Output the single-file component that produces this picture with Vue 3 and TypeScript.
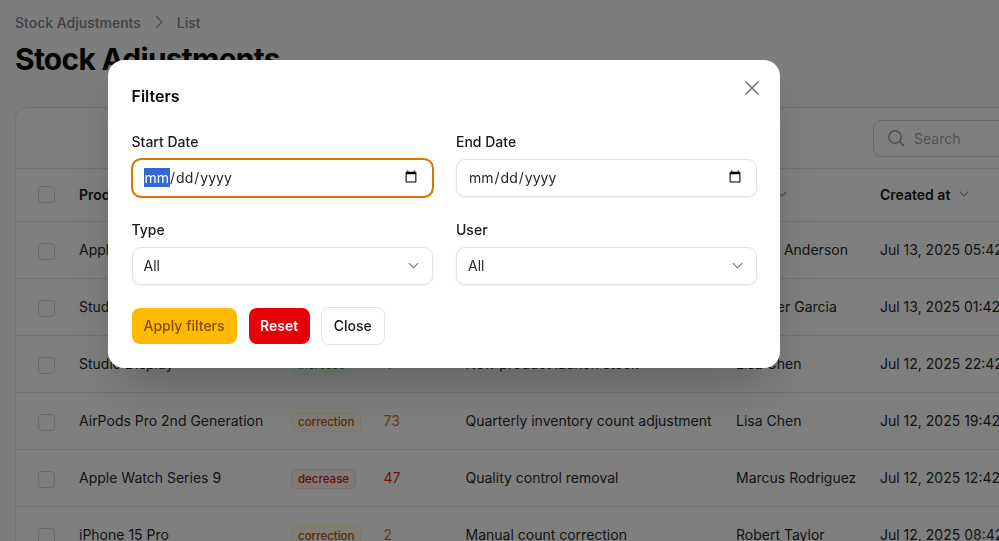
<script setup lang="ts">
import { onMounted, ref } from 'vue'

interface Row {
  product: string
  type: 'increase' | 'decrease' | 'correction'
  qty: number
  reason: string
  user: string
  created: string
}

const rows: Row[] = [
  { product: 'Apple Watch Ultra 2', type: 'increase', qty: 24, reason: 'Supplier restock delivery', user: 'Robert Anderson', created: 'Jul 13, 2025 05:42' },
  { product: 'Studio Display', type: 'decrease', qty: 12, reason: 'Damaged goods write-off', user: 'Jennifer Garcia', created: 'Jul 13, 2025 01:42' },
  { product: 'Studio Display', type: 'increase', qty: 4, reason: 'New product launch stock', user: 'Lisa Chen', created: 'Jul 12, 2025 22:42' },
  { product: 'AirPods Pro 2nd Generation', type: 'correction', qty: 73, reason: 'Quarterly inventory count adjustment', user: 'Lisa Chen', created: 'Jul 12, 2025 19:42' },
  { product: 'Apple Watch Series 9', type: 'decrease', qty: 47, reason: 'Quality control removal', user: 'Marcus Rodriguez', created: 'Jul 12, 2025 12:42' },
  { product: 'iPhone 15 Pro', type: 'correction', qty: 2, reason: 'Manual count correction', user: 'Robert Taylor', created: 'Jul 12, 2025 08:42' },
]

const columns = ['Product', 'Type', 'Quantity', 'Reason', 'User']
const startDate = ref<HTMLInputElement | null>(null)

onMounted(() => {
  startDate.value?.focus()
})
</script>

<template>
  <div class="page">
    <nav class="crumbs">
      <span>Stock Adjustments</span>
      <svg class="crumb-sep" viewBox="0 0 20 20" fill="none" stroke="currentColor" stroke-width="1.5">
        <path d="M7.5 4.5 13 10l-5.5 5.5" stroke-linecap="round" stroke-linejoin="round" />
      </svg>
      <span>List</span>
    </nav>
    <h1 class="title">Stock Adjustments</h1>

    <section class="card">
      <div class="toolbar">
        <div class="search">
          <svg class="search-icon" viewBox="0 0 20 20" fill="none" stroke="currentColor" stroke-width="1.5">
            <circle cx="9" cy="9" r="6.2" />
            <path d="m13.6 13.6 4 4" stroke-linecap="round" />
          </svg>
          <span>Search</span>
        </div>
      </div>
      <table class="table">
        <colgroup>
          <col class="c-check" />
          <col class="c-product" />
          <col class="c-type" />
          <col class="c-qty" />
          <col class="c-reason" />
          <col class="c-user" />
          <col class="c-created" />
        </colgroup>
        <thead>
          <tr>
            <th><span class="check"></span></th>
            <th v-for="c in columns" :key="c">
              <span class="th-inner">{{ c }}
                <svg class="sort" viewBox="0 0 20 20" fill="none" stroke="currentColor" stroke-width="1.5">
                  <path d="m5 7.5 5 5 5-5" stroke-linecap="round" stroke-linejoin="round" />
                </svg>
              </span>
            </th>
            <th>
              <span class="th-inner">Created at
                <svg class="sort" viewBox="0 0 20 20" fill="none" stroke="currentColor" stroke-width="1.5">
                  <path d="m5 7.5 5 5 5-5" stroke-linecap="round" stroke-linejoin="round" />
                </svg>
              </span>
            </th>
          </tr>
        </thead>
        <tbody>
          <tr v-for="(r, i) in rows" :key="i">
            <td><span class="check"></span></td>
            <td>{{ r.product }}</td>
            <td><span class="badge" :class="r.type">{{ r.type }}</span></td>
            <td :class="'qty-' + r.type">{{ r.qty }}</td>
            <td>{{ r.reason }}</td>
            <td>{{ r.user }}</td>
            <td>{{ r.created }}</td>
          </tr>
        </tbody>
      </table>
    </section>

    <div class="overlay">
      <div class="modal">
        <header class="modal-head">
          <h2>Filters</h2>
          <svg class="close-x" viewBox="0 0 24 24" fill="none" stroke="currentColor" stroke-width="1.5">
            <path d="M6 6l12 12M18 6 6 18" stroke-linecap="round" />
          </svg>
        </header>
        <div class="fields">
          <label class="field">
            <span>Start Date</span>
            <input ref="startDate" class="control" type="date" />
          </label>
          <label class="field">
            <span>End Date</span>
            <input class="control" type="date" />
          </label>
          <label class="field">
            <span>Type</span>
            <select class="control select">
              <option>All</option>
            </select>
          </label>
          <label class="field">
            <span>User</span>
            <select class="control select">
              <option>All</option>
            </select>
          </label>
        </div>
        <div class="actions">
          <button class="btn apply" type="button">Apply filters</button>
          <button class="btn reset" type="button">Reset</button>
          <button class="btn close" type="button">Close</button>
        </div>
      </div>
    </div>
  </div>
</template>

<style>
html, body {
  overflow: hidden;
  background: #fafafa;
}
</style>

<style scoped>
.page {
  width: 1300px;
  height: 541px;
  box-sizing: border-box;
  padding: 12px 0 0 15px;
  font-family: Inter, "Liberation Sans", sans-serif;
  font-size: 14px;
  color: #18181b;
  overflow: hidden;
}
.crumbs {
  display: flex;
  align-items: center;
  height: 20px;
  font-weight: 500;
  color: #80808a;
}
.crumb-sep {
  width: 20px;
  height: 20px;
  margin: 0 8px;
  color: #a1a1aa;
}
.title {
  margin: 9px 0 0;
  font-size: 30px;
  line-height: 36px;
  font-weight: 700;
  letter-spacing: -0.75px;
  color: #09090b;
}
.card {
  margin-top: 30px;
  width: 1240px;
  background: #fff;
  border: 1px solid #e4e4e7;
  border-radius: 12px;
  box-sizing: border-box;
}
.toolbar {
  height: 61px;
  box-sizing: border-box;
  padding: 12px 0 0 857px;
  border-bottom: 1px solid #e4e4e7;
}
.search {
  display: flex;
  align-items: center;
  width: 300px;
  height: 37px;
  box-sizing: border-box;
  padding: 0 0 1px 12px;
  gap: 8px;
  border: 1px solid #d4d4d8;
  border-radius: 8px;
  color: #a1a1aa;
}
.search-icon {
  width: 20px;
  height: 20px;
}
.table {
  border-collapse: collapse;
  table-layout: fixed;
  width: 1238px;
}
.c-check { width: 63px; }
.c-product { width: 212px; }
.c-type { width: 92.5px; }
.c-qty { width: 82px; }
.c-reason { width: 270.5px; }
.c-user { width: 144px; }
.table th {
  height: 50px;
  padding: 0 0 2px;
  text-align: left;
  font-weight: 600;
  border-bottom: 1px solid #e4e4e7;
}
.table td {
  height: 54px;
  padding: 0 0 2px;
  border-bottom: 1px solid #e4e4e7;
  color: #27272a;
}
.th-inner {
  display: inline-flex;
  align-items: center;
  gap: 6px;
}
.sort {
  width: 16px;
  height: 16px;
  color: #a1a1aa;
}
.check {
  display: block;
  width: 15px;
  height: 15px;
  margin: 4px 0 0 22px;
  border: 1px solid #d4d4d8;
  border-radius: 4px;
  background: #fff;
}
.table th .check {
  margin-top: 1px;
}
.badge {
  display: inline-block;
  margin-top: 3px;
  padding: 1px 6px;
  border-radius: 5px;
  font-size: 11.5px;
  line-height: 16px;
  font-weight: 500;
  border: 1px solid;
}
.increase {
  background: #f0fdf4;
  color: #15803d;
  border-color: #dcfce7;
}
.decrease {
  background: #fef2f2;
  color: #b91c1c;
  border-color: #fdd8d8;
}
.correction {
  background: #fffbeb;
  color: #b45309;
  border-color: #fef3c7;
}
.qty-increase { color: #16a34a !important; }
.qty-decrease { color: #dc2626 !important; }
.qty-correction { color: #d97706 !important; }

.overlay {
  position: fixed;
  inset: 0;
  background: rgba(0, 0, 0, 0.5);
}
.modal {
  position: absolute;
  left: 108px;
  top: 60px;
  width: 672px;
  height: 308px;
  box-sizing: border-box;
  padding: 24px 23px 24px 23.5px;
  background: #fff;
  border-radius: 16px;
  box-shadow: 0 25px 50px -12px rgba(0, 0, 0, 0.25);
}
.modal-head {
  position: relative;
  height: 24px;
}
.modal-head h2 {
  margin: 0;
  font-size: 16px;
  line-height: 24px;
  font-weight: 600;
  color: #09090b;
}
.close-x {
  position: absolute;
  right: -6.5px;
  top: -8px;
  width: 24px;
  height: 24px;
  color: #71717a;
}
.fields {
  display: grid;
  grid-template-columns: 301px 301px;
  column-gap: 23.5px;
  row-gap: 23px;
  margin-top: 24px;
}
.field {
  display: flex;
  flex-direction: column;
  gap: 7px;
}
.field > span {
  font-size: 14px;
  line-height: 20px;
  font-weight: 500;
  color: #18181b;
}
.field .control {
  height: 38px;
  width: 100%;
  box-sizing: border-box;
  padding: 0 12px 2px 11px;
  border: 1px solid #e4e4e7;
  border-radius: 9px;
  background: #fff;
  font-family: inherit;
  font-size: 14px;
  color: #27272a;
  box-shadow: 0 1px 2px rgba(0, 0, 0, 0.08);
}
.field .control:focus {
  outline: 2px solid #d97706;
  outline-offset: -1px;
  border-color: #d97706;
}
.select {
  appearance: none;
}
.field:has(.select) {
  position: relative;
}
.field:has(.select)::after {
  content: "";
  position: absolute;
  right: 16px;
  bottom: 18.5px;
  width: 6px;
  height: 6px;
  border-right: 1.8px solid #6b7280;
  border-bottom: 1.8px solid #6b7280;
  transform: rotate(45deg);
}
.actions {
  display: flex;
  align-items: center;
  gap: 12px;
  margin-top: 22px;
}
.btn {
  height: 36px;
  padding: 0 12px 1px;
  border: 0;
  border-radius: 8px;
  font-family: inherit;
  font-size: 14px;
  font-weight: 500;
}
.apply {
  background: #ffb900;
  color: #894b00;
}
.reset {
  padding: 0 11.5px 1px;
  background: #e7000b;
  color: #fff;
  font-weight: 600;
}
.close {
  height: 38px;
  margin-left: -1px;
  background: #fff;
  border: 1px solid #e4e4e7;
  color: #18181b;
}
</style>
